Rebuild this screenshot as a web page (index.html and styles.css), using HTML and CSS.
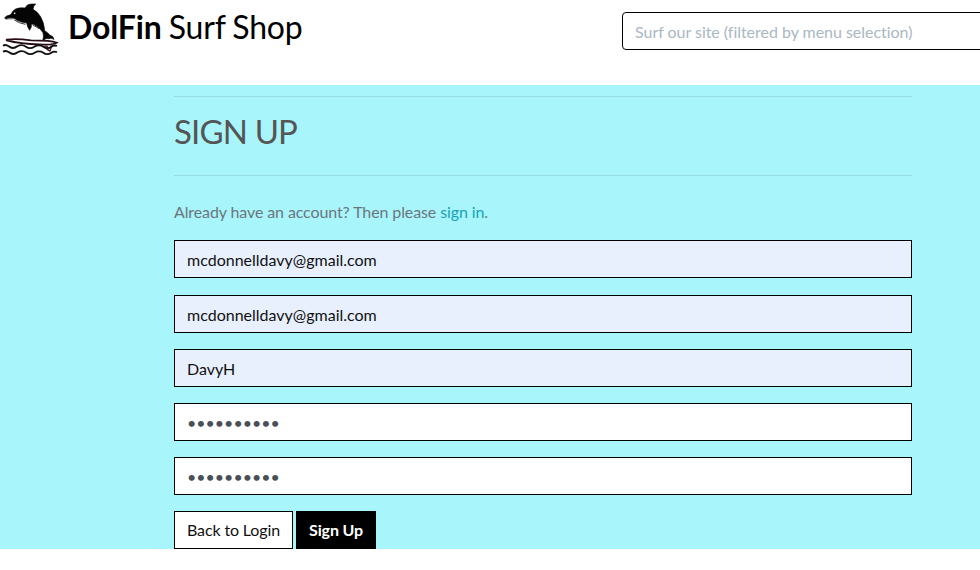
FILE: index.html
```
<!DOCTYPE html>
<html lang="en">
<head>
<meta charset="utf-8">
<title>DolFin Surf Shop</title>
<link rel="stylesheet" href="styles.css">
</head>
<body>
<header class="header">
  <a class="brand" href="#">
    <svg class="logo" viewBox="0 0 192 180" aria-hidden="true">
      <path d="M14 53L20 48Q28 47 33 43Q38 31 47 27Q58 22 76 24Q78 14 94 12L107 12Q99 18 99 28Q114 36 121 49Q132 67 134 92Q143 97 150 106Q160 108 162 118Q153 113 146 116Q138 114 133 119Q130 122 129 119Q132 109 129 98Q121 86 109 78Q101 71 94 72Q96 82 89 91Q81 80 80 69Q65 68 49 60L46 56L17 57Z" fill="#050505" stroke="#050505" stroke-width="2"/>
      <path d="M22 56Q34 53 43 57" fill="none" stroke="#fff" stroke-width="1.5"/>
      <path d="M43 60Q58 70 76 73M98 75Q109 80 116 86" fill="none" stroke="#333" stroke-width="3"/>
      <circle cx="44" cy="40" r="2.5" fill="#fff"/>
      <path d="M20 119Q48 115 93 121Q153 121 171 128Q159 136 118 133Q62 132 20 121Z" fill="#fff" stroke="#260b13" stroke-width="5"/>
      <path d="M134 137Q139 149 150 153Q155 144 153 136M139 137L148 147" fill="none" stroke="#45131f" stroke-width="4"/>
      <path d="M9 137Q17 132 26 139Q39 149 52 139Q65 131 78 140Q90 149 103 140Q117 132 130 140Q142 149 154 140Q163 134 171 138M9 155Q18 150 27 157Q40 167 53 157Q66 149 79 158Q91 167 104 158Q117 150 130 158Q142 167 154 158Q163 152 171 157" fill="none" stroke="#111" stroke-width="5.5"/>
    </svg>
    <span class="brand-name"><strong>DolFin</strong> Surf Shop</span>
  </a>
  <input class="search" type="text" placeholder="Surf our site (filtered by menu selection)">
</header>
<main class="page">
  <section class="signup">
    <hr class="rule">
    <h1 class="title">Sign Up</h1>
    <hr class="rule">
    <p class="hint">Already have an account? Then please <a href="#">sign in</a>.</p>
    <form class="form">
      <input class="field filled first" type="email" value="mcdonnelldavy@gmail.com">
      <input class="field filled" type="email" value="mcdonnelldavy@gmail.com">
      <input class="field filled" type="text" value="DavyH">
      <input class="field" type="password" value="surfing123">
      <input class="field" type="password" value="surfing123">
      <div class="actions">
        <a class="btn" href="#">Back to Login</a>
        <button class="btn primary" type="button">Sign Up</button>
      </div>
    </form>
  </section>
</main>
</body>
</html>
```
FILE: styles.css
```
* { box-sizing: border-box; }
body {
  margin: 0;
  background: #fff;
  font: 16px/24px Lato, sans-serif;
  color: #555;
  overflow: hidden;
}
.header {
  display: flex;
  justify-content: space-between;
  align-items: flex-start;
  height: 85px;
}
.brand {
  display: flex;
  color: #000;
  text-decoration: none;
}
.logo { width: 64px; height: 60px; }
.brand-name {
  margin: 8px 0 0 4px;
  font-size: 32px;
  line-height: 38px;
  letter-spacing: -0.15px;
  word-spacing: -1px;
  white-space: nowrap;
}
.brand-name strong { font-weight: 700; }
.search {
  flex: none;
  width: 400px;
  height: 38px;
  margin: 12px -42px 0 0;
  padding: 6px 12px;
  border: 1px solid #000;
  border-radius: 4px;
  font: inherit;
}
.search::placeholder { color: #aab7c4; opacity: 1; letter-spacing: -0.03px; }
.page {
  height: 464px;
  padding: 11px 68px 0 174px;
  background: #a8f6fc;
}
.rule {
  height: 1px;
  margin: 0;
  border: 0;
  background: #97dde3;
}
.title {
  margin: 13px 0 23px;
  font-size: 33px;
  line-height: 42px;
  font-weight: 400;
  letter-spacing: -0.85px;
  text-transform: uppercase;
  color: #555;
}
.hint { margin: 24px 0 16px; color: #6c757d; letter-spacing: -0.11px; }
.hint a { color: #17a2b8; text-decoration: none; }
.form { display: flex; flex-direction: column; gap: 16px; }
.field {
  width: 100%;
  height: 38px;
  padding: 6px 12px;
  border: 1px solid #000;
  border-radius: 0;
  background: #fff;
  color: #495057;
  font: inherit;
}
.filled { background: #e8f0fe; color: #111; }
.first { margin-bottom: 1px; }
.actions { display: flex; gap: 3px; }
.btn {
  width: 119px;
  height: 38px;
  padding: 6px 12px;
  border: 1px solid #000;
  background: #fff;
  color: #111;
  font: inherit;
  letter-spacing: -0.13px;
  text-decoration: none;
  white-space: nowrap;
}
.primary { width: 80px; background: #000; color: #fff; font-weight: 700; }
```
